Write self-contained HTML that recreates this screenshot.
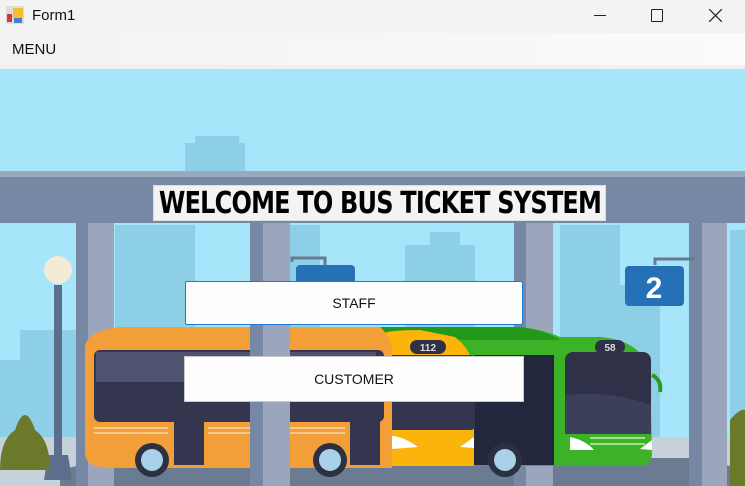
<!DOCTYPE html>
<html><head><meta charset="utf-8"><style>
html,body{margin:0;padding:0;width:745px;height:486px;overflow:hidden;font-family:"Liberation Sans",sans-serif;background:#f3f3f3}
.tb{position:absolute;left:0;top:0;width:745px;height:33px;background:#f3f3f3}
.menu{position:absolute;left:0;top:33px;width:745px;height:32px;background:linear-gradient(90deg,#f2f2f2,#fbfbfb)}
.btn{position:absolute;background:#fdfdfd;border:1px solid #c8c8c8;font-size:14px;color:#111;display:flex;align-items:center;justify-content:center}
</style></head><body>
<div class="tb">
<svg style="position:absolute;left:6px;top:6px" width="18" height="18"><rect x="0" y="0" width="18" height="18" fill="#ddd"/><rect x="1" y="8" width="5" height="8" fill="#d33"/><rect x="7" y="2" width="10" height="10" fill="#f3c030"/><rect x="8" y="12" width="8" height="5" fill="#4a7fd0"/></svg>
<div style="position:absolute;left:32px;top:7px;font-size:15px;color:#111">Form1</div>
<div style="position:absolute;left:594px;top:15px;width:12px;height:1px;background:#222"></div>
<div style="position:absolute;left:651px;top:9px;width:10px;height:11px;border:1px solid #222;border-radius:1px"></div>
<svg style="position:absolute;left:709px;top:9px" width="13" height="13"><path d="M0 0L13 13M13 0L0 13" stroke="#222" stroke-width="1.2"/></svg>
</div>
<div class="menu"><div style="position:absolute;left:12px;top:8px;font-size:15px;color:#111">MENU</div></div>
<svg style="position:absolute;left:0;top:65px" width="745" height="421" viewBox="0 65 745 421">
<rect x="0" y="65" width="745" height="421" fill="#a6e5fa"/>
<rect x="0" y="65" width="745" height="4" fill="#f0f0f0"/>
<g fill="#8dcfe6">
<rect x="185" y="143" width="60" height="40"/><rect x="195" y="136" width="44" height="10"/>
<rect x="115" y="225" width="80" height="230"/><rect x="20" y="330" width="60" height="120"/><rect x="0" y="360" width="40" height="90"/>
<rect x="290" y="225" width="30" height="230"/><rect x="405" y="245" width="70" height="90"/><rect x="430" y="232" width="30" height="20"/>
<rect x="560" y="225" width="60" height="230"/><rect x="600" y="285" width="60" height="160"/><rect x="730" y="230" width="15" height="200"/>
</g>
<rect x="0" y="437" width="745" height="49" fill="#c7d1da"/>
<path d="M60 470L110 458L700 458L745 470L745 486L60 486Z" fill="#6b7b92"/>
<rect x="0" y="171" width="745" height="7" fill="#98a9bb"/>
<rect x="0" y="177" width="745" height="46" fill="#7688a4"/>
<g><rect x="76" y="223" width="38" height="263" fill="#7688a4"/><rect x="88" y="223" width="26" height="263" fill="#9ba6bd"/>
<rect x="514" y="223" width="39" height="263" fill="#7688a4"/><rect x="526" y="223" width="27" height="263" fill="#9ba6bd"/>
<rect x="689" y="223" width="38" height="263" fill="#7688a4"/><rect x="702" y="223" width="25" height="263" fill="#9ba6bd"/></g>
<path d="M292 262V258H325V265" stroke="#6a7890" stroke-width="3" fill="none"/>
<rect x="296" y="265" width="59" height="30" rx="4" fill="#2570b7"/>
<path d="M655 265V259H695" stroke="#6a7890" stroke-width="3" fill="none"/>
<rect x="625" y="266" width="59" height="40" rx="4" fill="#2570b7"/>
<text x="654" y="298" font-size="30" font-weight="bold" fill="#fff" text-anchor="middle" font-family="Liberation Sans">2</text>
<path d="M360 367L365 337Q370 327 380 327L520 327Q545 330 560 337L600 337Q640 340 650 370L652 455Q650 466 640 466L360 466Z" fill="#3cb326"/>
<path d="M360 327L520 327Q545 330 560 340L365 340Z" fill="#22991a"/>
<rect x="565" y="352" width="86" height="82" rx="8" fill="#2e3147"/>
<path d="M565 395Q610 390 651 405L651 434L565 434Z" fill="#3b3f5a"/>
<rect x="595" y="340" width="30" height="14" rx="7" fill="#2e3147"/><text x="610" y="351" font-size="10" font-weight="bold" fill="#ddd" text-anchor="middle">58</text>
<path d="M570 437Q585 440 594 450L570 450Z" fill="#fff"/><path d="M652 440L640 449L652 450Z" fill="#fff"/>
<g stroke="#c9f0b8" stroke-width="1.5"><path d="M590 438H645M590 444H645M476 418H520M476 424H520"/></g>
<rect x="474" y="355" width="80" height="110" fill="#23273d"/>
<path d="M652 375Q662 380 660 392" stroke="#2b9a1a" stroke-width="4" fill="none"/>
<path d="M380 335Q385 330 420 330L455 337Q472 350 474 370L474 466L380 466Z" fill="#fbb40b"/>
<rect x="385" y="355" width="90" height="75" rx="4" fill="#34364f"/>
<rect x="410" y="340" width="36" height="14" rx="7" fill="#2e3147"/><text x="428" y="351" font-size="10" font-weight="bold" fill="#ddd" text-anchor="middle">112</text>
<path d="M392 436Q402 436 418 447L392 449Z" fill="#fff"/><path d="M474 437L460 447L474 448Z" fill="#fff"/>
<path d="M85 345Q90 330 120 327L380 327Q390 335 392 350L392 468L110 468Q87 468 85 455Z" fill="#f29f3a"/>
<rect x="94" y="350" width="290" height="72" rx="6" fill="#34364f"/>
<rect x="96" y="352" width="280" height="30" fill="#4f5370"/>
<rect x="174" y="400" width="30" height="65" fill="#34364f"/><rect x="350" y="400" width="30" height="65" fill="#34364f"/>
<g stroke="#f8d9a8" stroke-width="1.5"><path d="M94 428H168M94 433H168M208 428H345M208 433H345"/></g>
<g><circle cx="152" cy="460" r="17" fill="#2b3142"/><circle cx="152" cy="460" r="11" fill="#a9d2ea"/>
<circle cx="330" cy="460" r="17" fill="#2b3142"/><circle cx="330" cy="460" r="11" fill="#a9d2ea"/>
<circle cx="505" cy="460" r="17" fill="#2b3142"/><circle cx="505" cy="460" r="11" fill="#a9d2ea"/></g>
<rect x="250" y="223" width="40" height="263" fill="#7688a4"/><rect x="263" y="223" width="27" height="263" fill="#9ba6bd"/>
<rect x="54" y="285" width="8" height="170" fill="#5b6e8c"/>
<path d="M48 455H68L72 480H44Z" fill="#5b6e8c"/>
<circle cx="58" cy="270" r="14" fill="#f4ebd5"/>
<path d="M0 470Q0 440 15 430Q25 400 35 430Q50 440 50 470Z" fill="#6b7a2a"/>
<path d="M730 486L730 420Q740 408 745 410L745 486Z" fill="#6b7a2a"/>
</svg>
<div style="position:absolute;left:153px;top:185px;width:453px;height:36px;background:#f3f3f3;border:1px solid #ddd;box-sizing:border-box;white-space:nowrap;overflow:hidden">
<span style="position:absolute;left:50%;top:0;font-family:'DejaVu Sans','Liberation Sans',sans-serif;font-weight:bold;font-size:30px;line-height:36px;color:#000;letter-spacing:-1px;transform:translateX(-50%) scaleX(0.8)">WELCOME TO BUS TICKET SYSTEM</span></div>
<div class="btn" style="left:185px;top:281px;width:336px;height:42px;border:1px solid #1e7ad6;border-radius:2px">STAFF</div>
<div class="btn" style="left:184px;top:356px;width:338px;height:44px">CUSTOMER</div>
</body></html>
